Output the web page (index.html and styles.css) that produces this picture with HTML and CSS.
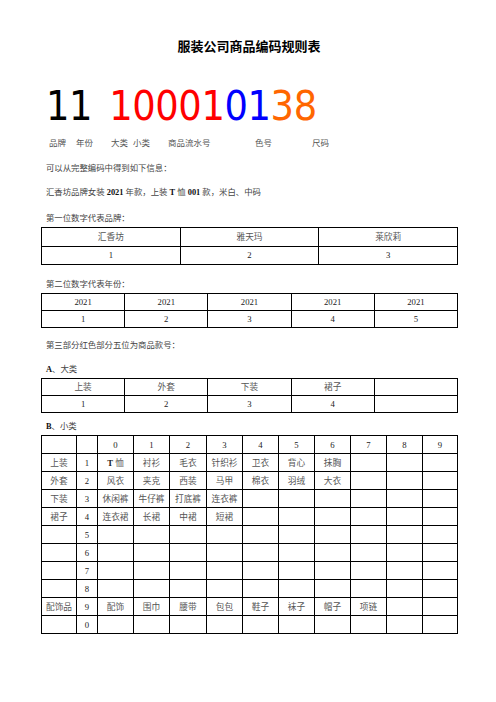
FILE: index.html
```html
<!DOCTYPE html>
<html lang="zh-CN">
<head>
<meta charset="utf-8">
<title>服装公司商品编码规则表</title>
<link rel="stylesheet" href="styles.css">
</head>
<body>
<div class="page">
  <h1 class="title">服装公司商品编码规则表</h1>

  <div class="code">
    <span class="c-black">11</span><span class="c-red">10001</span><span class="c-blue">01</span><span class="c-orange">38</span>
  </div>

  <div class="labels">
    <span class="l1">品牌</span><span class="l2">年份</span><span class="l3">大类</span><span class="l4">小类</span><span class="l5">商品流水号</span><span class="l6">色号</span><span class="l7">尺码</span>
  </div>

  <p class="p p1">可以从完整编码中得到如下信息：</p>
  <p class="p p2">汇香坊品牌女装 <b>2021</b> 年款，上装 <b>T</b> 恤 <b>001</b> 款，米白、中码</p>
  <p class="p p3">第一位数字代表品牌：</p>

  <table class="tbl t1">
    <tr><td>汇香坊</td><td>雅天玛</td><td>莱欣莉</td></tr>
    <tr><td class="num">1</td><td class="num">2</td><td class="num">3</td></tr>
  </table>

  <p class="p p4">第二位数字代表年份：</p>
  <table class="tbl t2">
    <tr><td class="num">2021</td><td class="num">2021</td><td class="num">2021</td><td class="num">2021</td><td class="num">2021</td></tr>
    <tr><td class="num">1</td><td class="num">2</td><td class="num">3</td><td class="num">4</td><td class="num">5</td></tr>
  </table>

  <p class="p p5">第三部分红色部分五位为商品款号：</p>
  <p class="p p6"><b>A</b>、大类</p>
  <table class="tbl t2">
    <tr><td>上装</td><td>外套</td><td>下装</td><td>裙子</td><td></td></tr>
    <tr><td class="num">1</td><td class="num">2</td><td class="num">3</td><td class="num">4</td><td></td></tr>
  </table>

  <p class="p p7"><b>B</b>、小类</p>
  <table class="tbl t4">
    <colgroup>
      <col class="w35"><col class="w21"><col class="w36"><col class="w36"><col class="w37"><col class="w36"><col class="w36"><col class="w36"><col class="w36"><col class="w36"><col class="w36"><col class="w35">
    </colgroup>
    <tr><td></td><td></td><td class="num">0</td><td class="num">1</td><td class="num">2</td><td class="num">3</td><td class="num">4</td><td class="num">5</td><td class="num">6</td><td class="num">7</td><td class="num">8</td><td class="num">9</td></tr>
    <tr><td>上装</td><td class="num">1</td><td><b>T</b> 恤</td><td>衬衫</td><td>毛衣</td><td>针织衫</td><td>卫衣</td><td>背心</td><td>抹胸</td><td></td><td></td><td></td></tr>
    <tr><td>外套</td><td class="num">2</td><td>风衣</td><td>夹克</td><td>西装</td><td>马甲</td><td>棉衣</td><td>羽绒</td><td>大衣</td><td></td><td></td><td></td></tr>
    <tr><td>下装</td><td class="num">3</td><td>休闲裤</td><td>牛仔裤</td><td>打底裤</td><td>连衣裤</td><td></td><td></td><td></td><td></td><td></td><td></td></tr>
    <tr><td>裙子</td><td class="num">4</td><td>连衣裙</td><td>长裙</td><td>中裙</td><td>短裙</td><td></td><td></td><td></td><td></td><td></td><td></td></tr>
    <tr><td></td><td class="num">5</td><td></td><td></td><td></td><td></td><td></td><td></td><td></td><td></td><td></td><td></td></tr>
    <tr><td></td><td class="num">6</td><td></td><td></td><td></td><td></td><td></td><td></td><td></td><td></td><td></td><td></td></tr>
    <tr><td></td><td class="num">7</td><td></td><td></td><td></td><td></td><td></td><td></td><td></td><td></td><td></td><td></td></tr>
    <tr><td></td><td class="num">8</td><td></td><td></td><td></td><td></td><td></td><td></td><td></td><td></td><td></td><td></td></tr>
    <tr><td>配饰品</td><td class="num">9</td><td>配饰</td><td>围巾</td><td>腰带</td><td>包包</td><td>鞋子</td><td>袜子</td><td>帽子</td><td>项链</td><td></td><td></td></tr>
    <tr><td></td><td class="num">0</td><td></td><td></td><td></td><td></td><td></td><td></td><td></td><td></td><td></td><td></td></tr>
  </table>
</div>
</body>
</html>
```

FILE: styles.css
```css
* { box-sizing: border-box; }
html, body { margin: 0; padding: 0; background: #fff; }
body {
  font-family: "Liberation Serif", "Noto Sans CJK SC", serif;
  color: #444;
}
.page { width: 496px; padding-top: 38px; }

.title {
  margin: 0;
  text-align: center;
  font-family: "Noto Sans CJK SC", sans-serif;
  font-weight: 700;
  font-size: 13px;
  line-height: 16px;
  color: #000;
  padding-left: 2px;
}

.code {
  margin-top: 30px;
  height: 44px;
  line-height: 44px;
  padding-left: 46px;
  font-family: "DejaVu Sans", sans-serif;
  font-stretch: condensed;
  font-size: 41px;
  letter-spacing: -0.4px;
  white-space: nowrap;
}
.c-black { color: #000; margin-right: 17px; }
.c-red { color: #ff0000; }
.c-blue { color: #0000ff; }
.c-orange { color: #ff6600; }

.labels {
  margin-top: 9px;
  height: 12px;
  line-height: 12px;
  padding-left: 49px;
  display: flex;
  font-size: 8.5px;
  color: #555;
  white-space: nowrap;
}
.l1 { width: 27px; }
.l2 { width: 35px; }
.l3 { width: 22px; }
.l4 { width: 35px; }
.l5 { width: 87px; }
.l6 { width: 57px; }

.p {
  margin: 0;
  padding-left: 46px;
  height: 12px;
  line-height: 12px;
  font-size: 8.4px;
  color: #444;
  white-space: nowrap;
}
.p b { color: #111; font-weight: 700; }
.p1 { margin-top: 14px; }
.p2 { margin-top: 12px; }
.p3 { margin-top: 14px; }
.p4 { margin-top: 14px; }
.p5 { margin-top: 12px; }
.p6 { margin-top: 12px; }
.p7 { margin-top: 8px; }

.tbl {
  margin-left: 41px;
  width: 417px;
  border-collapse: collapse;
  table-layout: fixed;
  margin-top: 2px;
}
.tbl td {
  border: 1px solid #000;
  text-align: center;
  vertical-align: middle;
  padding: 0;
  font-size: 8.7px;
  line-height: 10px;
  color: #555;
  white-space: nowrap;
}
.tbl td.num { color: #222; }
.tbl td b { color: #222; }
.t1 tr { height: 18.5px; }
.t2 tr { height: 17px; }
.t4 tr { height: 18px; }
.w35 { width: 35px; }
.w21 { width: 21px; }
.w36 { width: 36px; }
.w37 { width: 37px; }
```
